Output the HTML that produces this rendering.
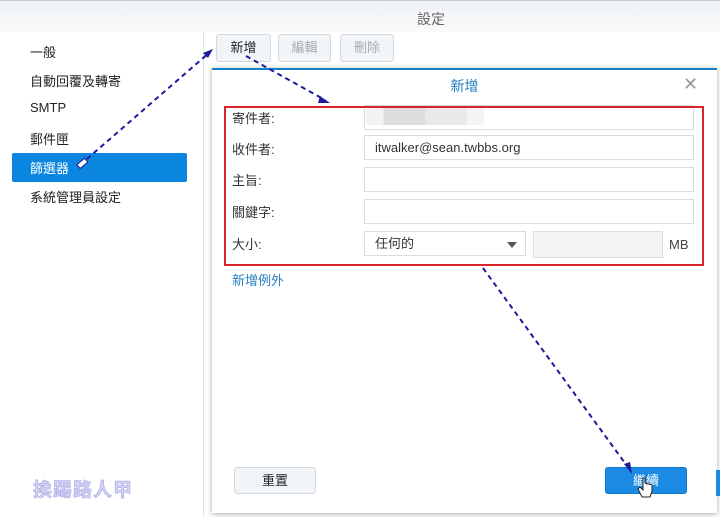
<!DOCTYPE html>
<html><head><meta charset="utf-8"><style>
*{margin:0;padding:0;box-sizing:border-box}
body{width:720px;height:517px;overflow:hidden;background:#fff;font-family:"Liberation Sans","Noto Sans CJK TC",sans-serif;font-size:13px;color:#333;position:relative}
.a{position:absolute}
.hdr{left:0;top:0;width:720px;height:32px;background:linear-gradient(#eef1f4,#fafbfc);border-top:1px solid #c8ccd2}
.side{left:0;top:32px;width:204px;height:485px;border-right:1px solid #e0e3e6}
.it{left:30px;font-size:13px;color:#222}
.btn{border:1px solid #d3d8de;border-radius:3px;background:#f2f5f8;text-align:center;font-size:13px;line-height:26px}
.inp{left:364px;width:330px;height:25px;border:1px solid #d8dde2;background:#fff;font-size:13px;line-height:23px;padding-left:10px;color:#333}
.lbl{left:232px;font-size:13px;color:#333}
</style></head><body>
<div class="a hdr"></div>
<div class="a" style="left:0;top:9px;width:862px;text-align:center;color:#666;font-size:14px">設定</div>
<div class="a side"></div>
<div class="a it" style="top:42px">一般</div>
<div class="a it" style="top:71px">自動回覆及轉寄</div>
<div class="a it" style="top:100px">SMTP</div>
<div class="a it" style="top:129px">郵件匣</div>
<div class="a" style="left:12px;top:153px;width:175px;height:29px;background:#0a86e0;border-radius:2px"></div>
<div class="a it" style="top:158px;color:#fff">篩選器</div>
<div class="a it" style="top:187px">系統管理員設定</div>
<div class="a btn" style="left:216px;top:34px;width:55px;height:28px;color:#222">新增</div>
<div class="a btn" style="left:278px;top:34px;width:53px;height:28px;color:#aaa">編輯</div>
<div class="a btn" style="left:340px;top:34px;width:54px;height:28px;color:#aaa">刪除</div>
<div class="a" style="left:212px;top:68px;width:505px;height:445px;background:#fff;border-top:2px solid #1581c8;box-shadow:0 1px 5px rgba(0,0,0,.35)"></div>
<div class="a" style="left:212px;top:76px;width:505px;text-align:center;color:#1a7fc0;font-size:14px">新增</div>
<div class="a" style="left:683px;top:74px;color:#999;font-size:18px">✕</div>
<div class="a lbl" style="top:108px">寄件者:</div>
<div class="a lbl" style="top:139px">收件者:</div>
<div class="a lbl" style="top:170px">主旨:</div>
<div class="a lbl" style="top:202px">關鍵字:</div>
<div class="a lbl" style="top:234px">大小:</div>
<div class="a inp" style="top:105px"></div>
<div class="a" style="left:366px;top:107px;width:118px;height:18px;background:linear-gradient(90deg,#f2f2f2 0 15%,#ddd 15% 50%,#e9e9e9 50% 85%,#f4f4f4 85%)"></div>
<div class="a inp" style="top:135px">itwalker@sean.twbbs.org</div>
<div class="a inp" style="top:167px"></div>
<div class="a inp" style="top:199px"></div>
<div class="a inp" style="top:231px;width:162px">任何的<span style="position:absolute;right:8px;top:10px;border:5px solid transparent;border-top:6px solid #555;border-bottom:0"></span></div>
<div class="a" style="left:533px;top:231px;width:130px;height:27px;border:1px solid #d8dde2;background:#f2f4f6"></div>
<div class="a" style="left:669px;top:237px;color:#444">MB</div>
<div class="a" style="left:224px;top:106px;width:480px;height:160px;border:2px solid #d8242c"></div>
<div class="a" style="left:232px;top:270px;color:#2a82c2">新增例外</div>
<div class="a btn" style="left:234px;top:467px;width:82px;height:27px;color:#222">重置</div>
<div class="a btn" style="left:605px;top:467px;width:82px;height:27px;background:#1a8ae3;border-color:#1277c8;color:#fff">繼續</div>
<div class="a" style="left:716px;top:470px;width:4px;height:26px;background:#1a8ae3"></div>
<div class="a" style="left:33px;top:475px;color:#d2d2f4;font-size:19px;font-weight:bold;-webkit-text-stroke:0.6px #a8a8e4;letter-spacing:1px">挨踢路人甲</div>
<svg class="a" style="left:0;top:0" width="720" height="517">
<g stroke="#1a1a9a" stroke-width="2" stroke-dasharray="5,4" fill="none">
<line x1="80" y1="165" x2="210" y2="52"/>
<line x1="246" y1="56" x2="325" y2="100"/>
<line x1="483" y1="268" x2="630" y2="470"/>
</g>
<g fill="#1a1a9a">
<polygon points="213,49 203,53 208,58"/>
<polygon points="330,103 320,96 318,103"/>
<polygon points="632,474 624,464 630,462"/>
</g>
<rect x="77" y="161" width="10" height="5" fill="#fff" stroke="#1a1a9a" transform="rotate(-40 82 163)"/>
<path d="M643 478 v12 l-3 -3 l-2 2 l4 8 h8 l2-6 v-6 l-3-1 l-2 0 l-2-1 v-5 z" fill="#fff" stroke="#222" stroke-width="1"/>
</svg>
</body></html>
